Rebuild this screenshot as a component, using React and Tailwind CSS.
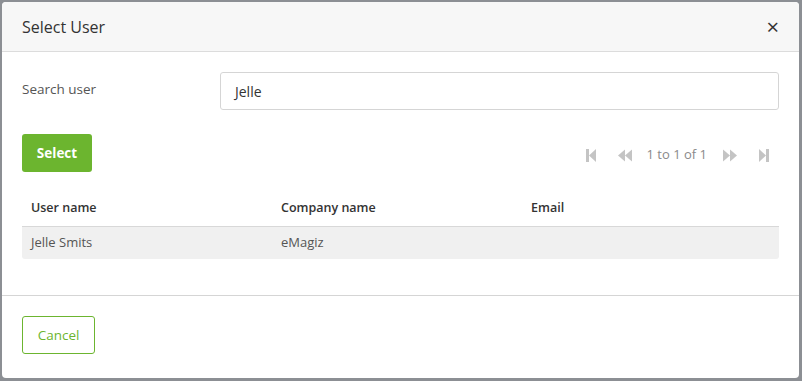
import React from 'react';

const font = { fontFamily: '"Open Sans", "Noto Sans", sans-serif' };

const FirstIcon = () => (
  <svg width="10" height="13" viewBox="0 0 10 13" className="fill-[#c4c4c4]">
    <rect x="0" y="0" width="3" height="13" />
    <path d="M10 0 L10 13 L3 6.5 Z" />
  </svg>
);

const LastIcon = () => (
  <svg width="10" height="13" viewBox="0 0 10 13" className="fill-[#c4c4c4]">
    <path d="M0 0 L0 13 L7 6.5 Z" />
    <rect x="7" y="0" width="3" height="13" />
  </svg>
);

const PrevIcon = () => (
  <svg width="14" height="13" viewBox="0 0 14 13" className="fill-[#c4c4c4]">
    <path d="M7 0.5 L7 12.5 L0 6.5 Z" />
    <path d="M14 0.5 L14 12.5 L7 6.5 Z" />
  </svg>
);

const NextIcon = () => (
  <svg width="14" height="13" viewBox="0 0 14 13" className="fill-[#c4c4c4]">
    <path d="M0 0.5 L0 12.5 L7 6.5 Z" />
    <path d="M7 0.5 L7 12.5 L14 6.5 Z" />
  </svg>
);

const users = [{ name: 'Jelle Smits', company: 'eMagiz', email: '' }];

export default function App() {
  return (
    <div className="w-[802px] h-[381px] bg-[#8c8f94] p-[2px] pr-[3px] pb-[3px]" style={font}>
      <div className="w-full h-full bg-white rounded-[4px] overflow-hidden flex flex-col">
        {/* Header */}
        <div className="h-[50px] bg-[#f7f7f7] border-b border-[#dcdcdc] flex items-center justify-between pl-5 pr-5">
          <h4 className="text-[16px] text-[#333]">Select User</h4>
          <button className="text-[#333] text-[22px] leading-none mt-[-2px]">×</button>
        </div>

        {/* Body */}
        <div className="flex-1 px-5 pt-5">
          <div className="flex items-center">
            <label className="w-[198px] text-[13.5px] text-[#555] mt-[-3px]">Search user</label>
            <div className="flex-1 h-[38px] border border-[#d5d5d5] rounded-[3px] flex items-center px-[14px] text-[14px] text-[#333]">
              Jelle
            </div>
          </div>

          <div className="flex items-center justify-between mt-[24px]">
            <button className="w-[70px] h-[38px] bg-[#6cb52f] rounded-[3px] text-white text-[13.5px] font-bold">
              Select
            </button>
            <div className="flex items-center text-[13px] text-[#8a8a8a] mr-[10px] mt-[4px]">
              <FirstIcon />
              <span className="ml-[22px] flex"><PrevIcon /></span>
              <span className="ml-[15px]">1 to 1 of 1</span>
              <span className="ml-[16px] flex"><NextIcon /></span>
              <span className="ml-[22px] flex"><LastIcon /></span>
            </div>
          </div>

          <table className="w-full mt-[23px] text-[13px] text-[#333] border-collapse table-fixed">
            <thead>
              <tr className="h-[31px] border-b border-[#d8d8d8]">
                <th className="w-[250px] text-left font-semibold text-[12.5px] pl-[9px] pb-[3px]">User name</th>
                <th className="w-[250px] text-left font-semibold text-[12.5px] pl-[9px] pb-[3px]">Company name</th>
                <th className="text-left font-semibold text-[12.5px] pl-[9px] pb-[3px]">Email</th>
              </tr>
            </thead>
            <tbody>
              {users.map((u) => (
                <tr key={u.name} className="h-[33px] bg-[#f0f0f0] text-[#555]">
                  <td className="pl-[9px] rounded-bl-[3px]">{u.name}</td>
                  <td className="pl-[9px]">{u.company}</td>
                  <td className="pl-[9px] rounded-br-[3px]">{u.email}</td>
                </tr>
              ))}
            </tbody>
          </table>
        </div>

        {/* Footer */}
        <div className="border-t border-[#d5d5d5] h-[83px] px-5 pt-[20px]">
          <button className="w-[73px] h-[38px] border border-[#6cb52f] rounded-[3px] text-[#6cb52f] text-[13.5px]">
            Cancel
          </button>
        </div>
      </div>
    </div>
  );
}
